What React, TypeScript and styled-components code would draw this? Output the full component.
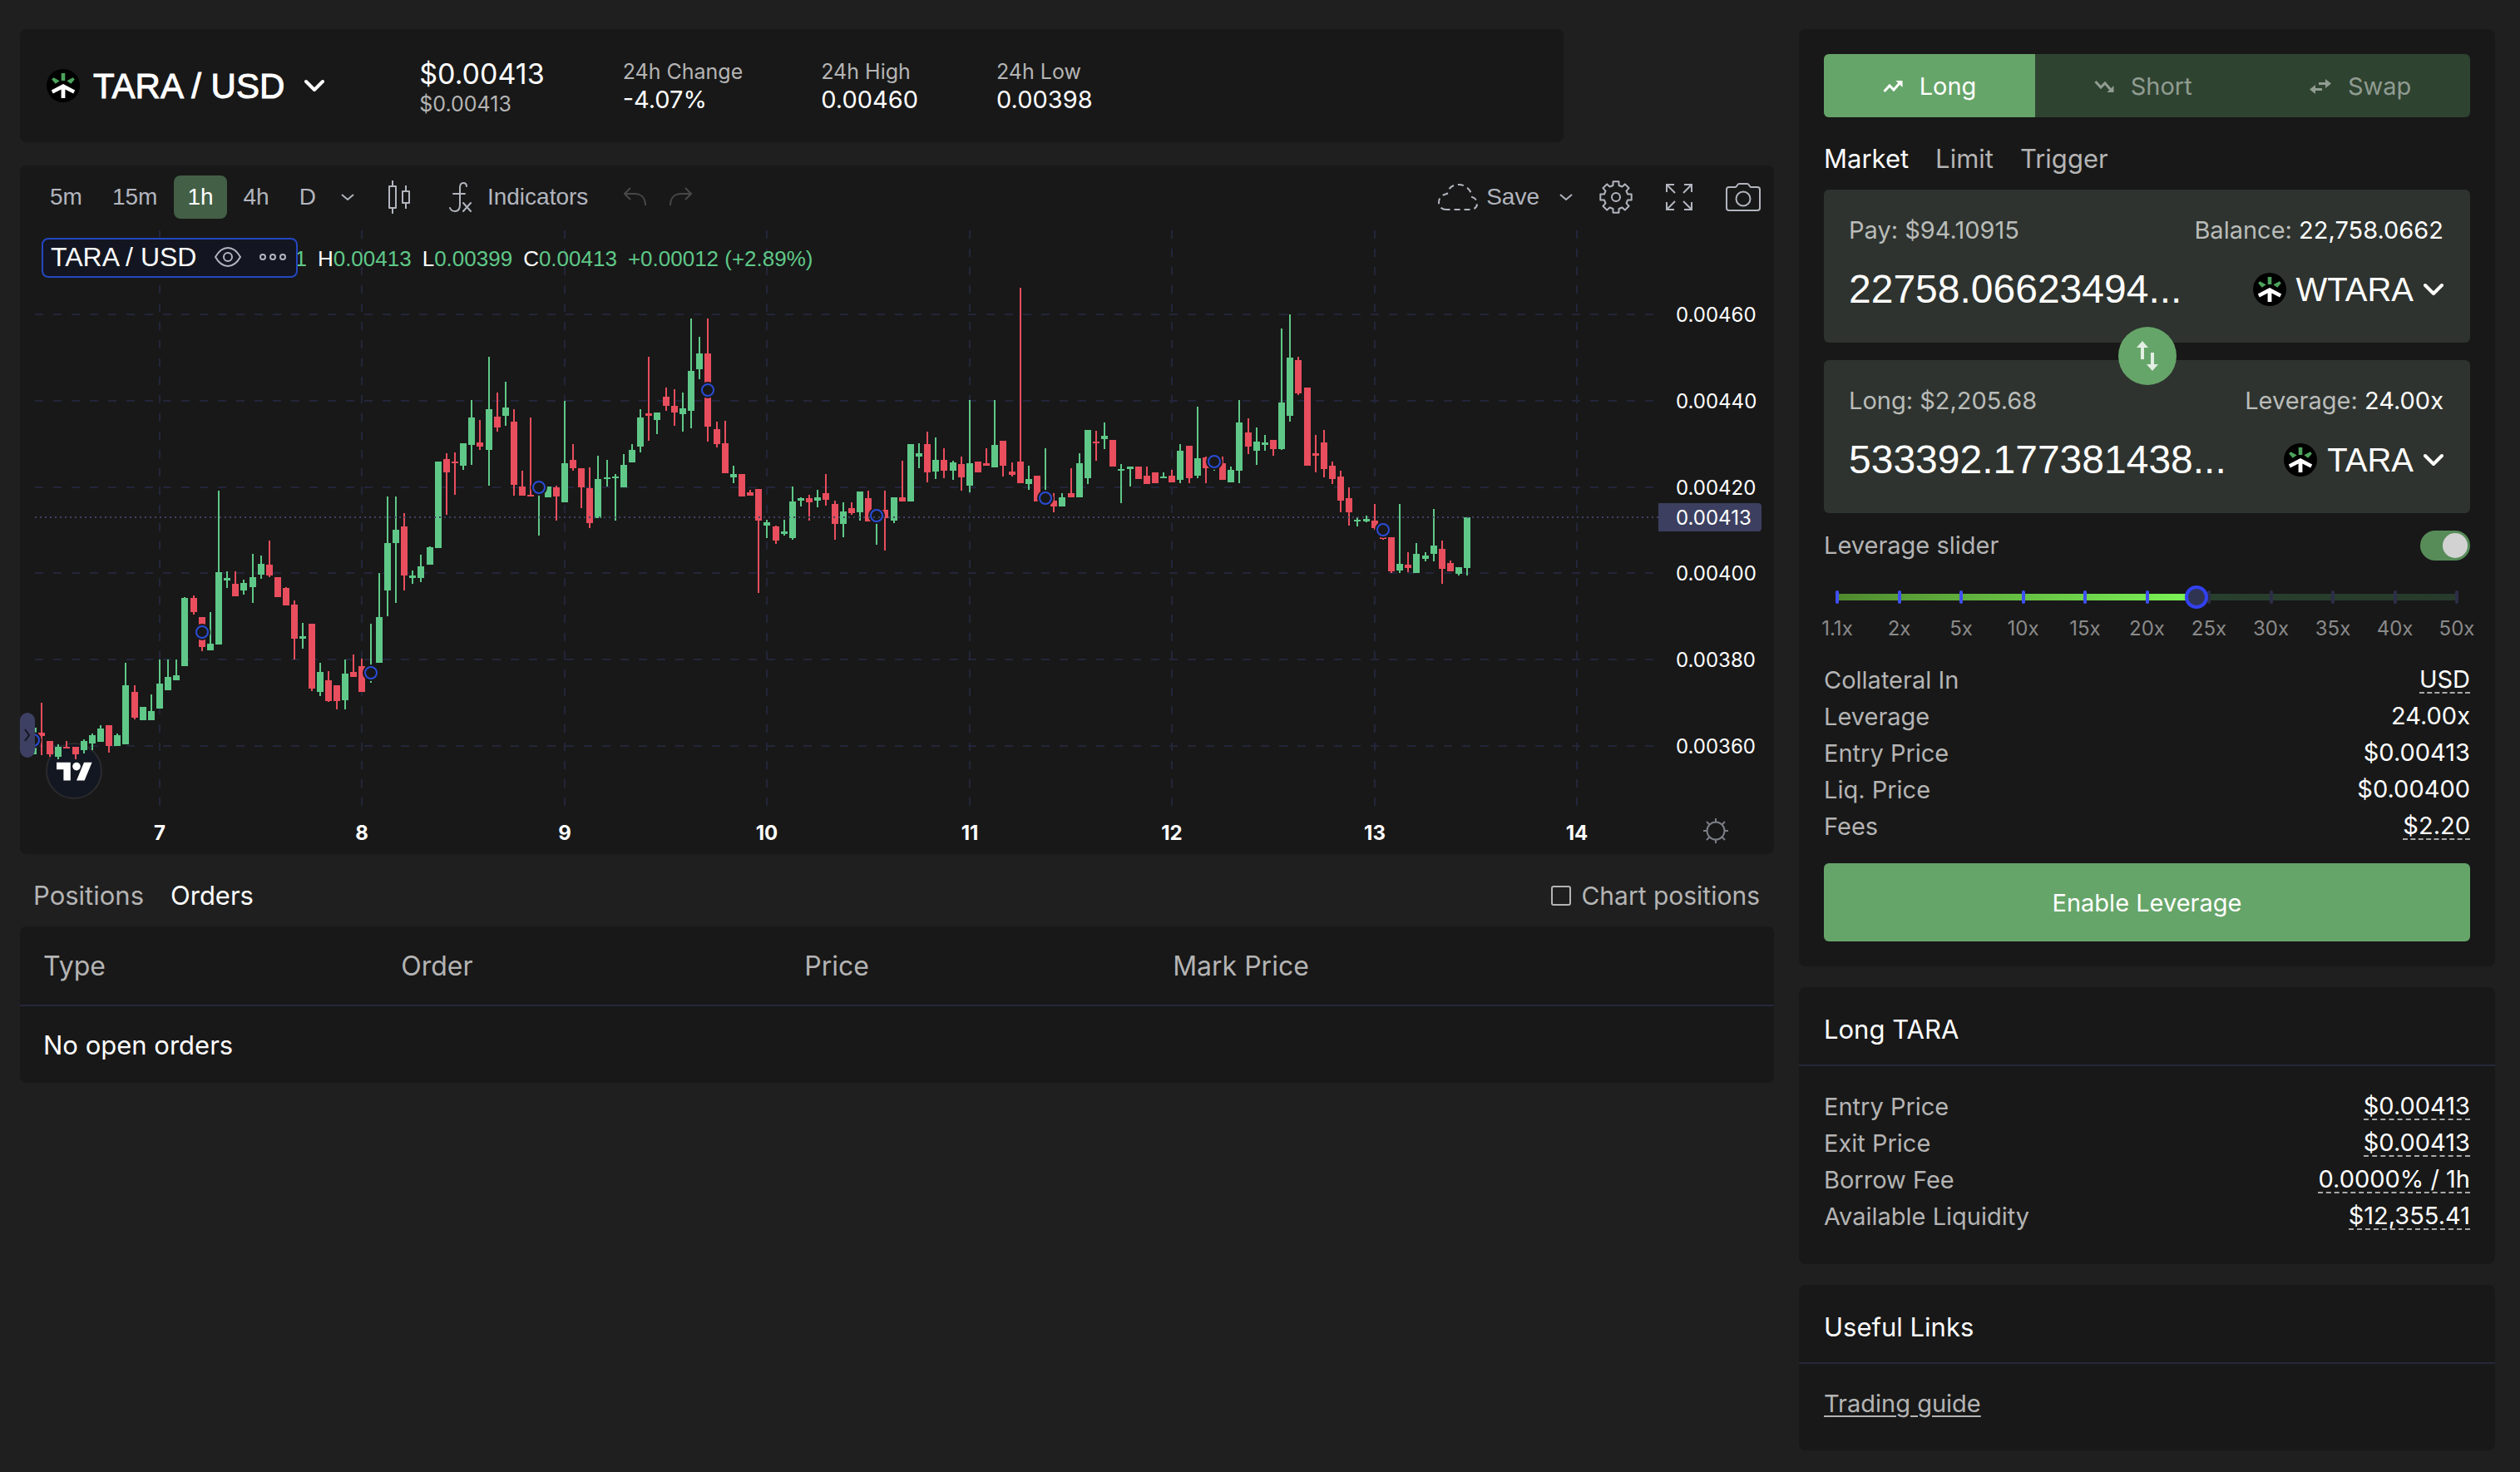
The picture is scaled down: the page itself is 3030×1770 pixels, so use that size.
import React, { useState } from "react";
import styled, { createGlobalStyle, css } from "styled-components";

const color = {
  page: "#1f1f1f",
  card: "#181818",
  field: "#2e332f",
  line: "#25273b",
  white: "#ffffff",
  muted: "#b4b4b4",
  dim: "#8a8a8a",
  tool: "#b2b5be",
  green: "#66a569",
  greenDark: "#2f4331",
  up: "#5fc888",
  down: "#e84e5d",
  blue: "#2a4cd6",
  tag: "#3c3f60",
};

const ui = `Inter, "Liberation Sans", sans-serif`;
const helvetica = `"Liberation Sans", Arial, sans-serif`;

const GlobalStyle = createGlobalStyle`
  *, *::before, *::after { box-sizing: border-box; }
  body {
    margin: 0;
    background: ${color.page};
    color: ${color.white};
    font: 400 29px/36px ${ui};
  }
  button, input { font: inherit; color: inherit; }
  button { border: 0; padding: 0; background: none; cursor: pointer; }
  svg { display: block; flex: none; }
  h1, h2, dl, dd { margin: 0; font-weight: 400; }
`;

/* ---------- layout ---------- */

const Page = styled.div`
  display: flex;
  align-items: flex-start;
  gap: 30px;
  padding: 35px 30px 27px 24px;
  @media (max-width: 1500px) {
    flex-direction: column;
    align-items: stretch;
  }
`;

const Main = styled.main`
  flex: 1 1 0;
  min-width: 0;
`;

const Side = styled.aside`
  flex: 0 0 837px;
  min-width: 0;
  display: flex;
  flex-direction: column;
  gap: 25px;
  @media (max-width: 1500px) {
    flex: none;
  }
`;

const Card = styled.section`
  background: ${color.card};
  border-radius: 8px;
`;

/* ---------- market header ---------- */

const MarketHeader = styled(Card)`
  display: flex;
  align-items: center;
  gap: 94px;
  width: 88%;
  min-height: 136px;
  padding: 0 32px;
`;

const PairButton = styled.button`
  display: flex;
  align-items: center;
  gap: 16px;
  margin-right: 20px;
  white-space: nowrap;
`;

const PairName = styled.span`
  padding-top: 2px;
  font: 400 42px/52px ${helvetica};
  -webkit-text-stroke: 1px ${color.white};
  margin-right: 8px;
`;

const Stat = styled.div<{ $price?: boolean }>`
  display: flex;
  flex-direction: column;
  white-space: nowrap;
  padding-top: ${(p) => (p.$price ? 4 : 0)}px;
`;

const StatLabel = styled.span`
  font-size: 25px;
  line-height: 33px;
  color: ${color.muted};
`;

const StatValue = styled.span<{ $large?: boolean }>`
  font-size: ${(p) => (p.$large ? 34 : 29)}px;
  line-height: ${(p) => (p.$large ? 40 : 33)}px;
`;

/* ---------- chart ---------- */

const ChartCard = styled(Card)`
  margin-top: 28px;
`;

const Toolbar = styled.div`
  display: flex;
  justify-content: space-between;
  padding: 12px 16px 14px 20px;
  font-family: ${helvetica};
  font-size: 28px;
  color: ${color.tool};
`;

const ToolGroup = styled.div<{ $gap: number }>`
  display: flex;
  align-items: center;
  gap: ${(p) => p.$gap}px;
`;

const ToolButton = styled.button<{ $active?: boolean; $pad?: number; $faint?: boolean }>`
  display: flex;
  align-items: center;
  gap: 18px;
  height: 52px;
  padding: 0 ${(p) => p.$pad ?? 16}px;
  border-radius: 8px;
  ${(p) => p.$active && css`background: #435f46; color: ${color.white};`}
  ${(p) => p.$faint && css`color: #484848;`}
`;

const SaveButton = styled(ToolButton)`
  gap: 10px;
`;

const Plot = styled.div`
  position: relative;
`;

const PlotSvg = styled.svg`
  width: 100%;
  height: auto;
  border-radius: 8px;
`;

const Legend = styled.div`
  position: absolute;
  top: 8px;
  left: 26px;
  display: flex;
  align-items: center;
  font: 400 26px/48px ${helvetica};
  white-space: nowrap;
`;

const LegendPair = styled.div`
  position: relative;
  z-index: 1;
  display: flex;
  align-items: center;
  height: 48px;
  margin-right: -4px;
  padding: 0 12px 2px 9px;
  border: 2px solid #2447c0;
  border-radius: 8px;
  background: #131621;
  color: ${color.tool};
`;

const LegendName = styled.span`
  font-size: 32px;
  line-height: 42px;
  color: ${color.white};
`;

const LegendButton = styled.button`
  margin-left: 22px;
`;

const Ohlc = styled.span<{ $gap?: number }>`
  padding-top: 2px;
  margin-left: ${(p) => p.$gap ?? 13}px;
  color: ${color.up};
`;

const OhlcKey = styled.span`
  color: ${color.white};
`;

const DrawerHandle = styled.button`
  position: absolute;
  left: 0;
  top: 580px;
  display: grid;
  place-items: center;
  width: 18px;
  height: 54px;
  border-radius: 9px;
  background: #3d3f63;
  color: #15161f;
`;

const AxisSettings = styled.button`
  position: absolute;
  right: 54px;
  bottom: 12px;
  color: #7c7e86;
`;

/* ---------- text tabs ---------- */

const TextTabs = styled.div<{ $inset?: boolean }>`
  display: flex;
  align-items: center;
  gap: 32px;
  padding: 32px ${(p) => (p.$inset ? 17 : 0)}px 19px ${(p) => (p.$inset ? 16 : 0)}px;
`;

const TextTab = styled.button<{ $active?: boolean }>`
  font-size: 31px;
  line-height: 36px;
  color: ${(p) => (p.$active ? color.white : color.muted)};
`;

const CheckLabel = styled.label`
  display: flex;
  align-items: center;
  gap: 12px;
  margin-left: auto;
  font-size: 30px;
  color: ${color.muted};
`;

const CheckBox = styled.input`
  appearance: none;
  width: 24px;
  height: 24px;
  margin: 0;
  border: 2px solid ${color.muted};
  border-radius: 3px;
  &:checked { background: ${color.green}; }
`;

/* ---------- orders table ---------- */

const OrdersTable = styled.table`
  width: 100%;
  table-layout: fixed;
  border-collapse: separate;
  border-spacing: 0;
  background: ${color.card};
  border-radius: 8px;
`;

const HeadCell = styled.th`
  height: 96px;
  padding: 2px 0 0 28px;
  border-bottom: 2px solid ${color.line};
  font-size: 32px;
  font-weight: 400;
  text-align: left;
  color: ${color.muted};
`;

const EmptyCell = styled.td`
  height: 92px;
  padding: 2px 0 0 28px;
  font-size: 31px;
`;

const Col = styled.col<{ $share: string }>`
  width: ${(p) => p.$share};
`;

/* ---------- trade box ---------- */

const TradeCard = styled(Card)`
  padding: 30px;
`;

const SideTabs = styled.div`
  display: flex;
  border-radius: 6px;
  overflow: hidden;
  background: ${color.greenDark};
`;

const SideTab = styled.button<{ $active?: boolean }>`
  flex: 1 1 auto;
  display: flex;
  align-items: center;
  justify-content: center;
  gap: 20px;
  height: 76px;
  padding-top: 2px;
  background: ${(p) => (p.$active ? color.green : "transparent")};
  color: ${(p) => (p.$active ? color.white : "#909c91")};
`;

const Fields = styled.div`
  position: relative;
  display: flex;
  flex-direction: column;
  gap: 21px;
`;

const Field = styled.div`
  padding: 30px 32px 34px 30px;
  border-radius: 6px;
  background: ${color.field};
`;

const FieldTop = styled.div`
  display: flex;
  justify-content: space-between;
  line-height: 38px;
  color: #b9bcb9;
`;

const FieldMain = styled.div`
  display: flex;
  align-items: center;
  justify-content: space-between;
  gap: 24px;
  height: 60px;
  margin-top: 22px;
`;

const Strong = styled.span`
  color: ${color.white};
`;

const AmountInput = styled.input`
  flex: 1 1 0;
  min-width: 0;
  padding: 0;
  border: 0;
  outline: 0;
  background: transparent;
  font: 400 48px/60px ${helvetica};
`;

const TokenButton = styled.button`
  display: flex;
  align-items: center;
  gap: 12px;
  font: 400 40px/48px ${helvetica};
`;

const SwitchButton = styled.button`
  position: absolute;
  left: calc(50% - 35px);
  top: calc(50% - 30px);
  display: grid;
  place-items: center;
  width: 70px;
  height: 70px;
  border-radius: 50%;
  background: ${color.green};
`;

const ToggleRow = styled.label`
  display: flex;
  align-items: center;
  justify-content: space-between;
  height: 36px;
  margin-top: 21px;
  color: ${color.muted};
`;

const Toggle = styled.input`
  appearance: none;
  display: flex;
  align-items: center;
  width: 60px;
  height: 36px;
  margin: 0;
  padding: 3px;
  border-radius: 18px;
  background: #3a3a3a;
  &::before {
    content: "";
    width: 30px;
    height: 30px;
    border-radius: 50%;
    background: #d2d2d2;
  }
  &:checked {
    background: #578c59;
    justify-content: flex-end;
  }
`;

const SliderBox = styled.div`
  position: relative;
  display: flex;
  align-items: center;
  height: 28px;
  margin: 30px 16px 0;
`;

const Rail = styled.div`
  flex: 1;
  display: flex;
  height: 8px;
  background: linear-gradient(90deg, #2b4733, #273a2b);
`;

const RailFill = styled.div`
  background: linear-gradient(90deg, #50892f, #7cf657);
`;

const Marks = styled.div`
  position: absolute;
  inset: 6px -2px;
  display: flex;
  justify-content: space-between;
`;

const Mark = styled.span<{ $on: boolean }>`
  width: 4px;
  border-radius: 2px;
  background: ${(p) => (p.$on ? "#3f50f2" : "#2c2e48")};
`;

const Range = styled.input`
  position: absolute;
  inset: 0 -14px;
  appearance: none;
  margin: 0;
  background: transparent;
  &::-webkit-slider-thumb {
    appearance: none;
    width: 28px;
    height: 28px;
    border: 4px solid #3241ee;
    border-radius: 50%;
    background: #2f3452;
  }
`;

const MarkLabels = styled.div`
  display: flex;
  justify-content: space-between;
  margin: 10px -21px 0;
  font-size: 24px;
  line-height: 28px;
  color: ${color.dim};
`;

const MarkLabel = styled.span`
  width: 74px;
  text-align: center;
`;

const InfoList = styled.dl<{ $first?: boolean }>`
  margin-top: ${(p) => (p.$first ? 26 : 0)}px;
`;

const InfoRow = styled.div`
  display: flex;
  align-items: center;
  justify-content: space-between;
  height: 44px;
`;

const InfoLabel = styled.dt`
  color: ${color.muted};
`;

const InfoValue = styled.dd<{ $hint?: boolean }>`
  line-height: 30px;
  border-bottom: 2px ${(p) => (p.$hint ? "dashed #a9a9a9" : "solid transparent")};
`;

const SubmitButton = styled.button`
  width: 100%;
  height: 94px;
  margin-top: 22px;
  padding-top: 2px;
  border-radius: 6px;
  background: ${color.green};
`;

const CardTitle = styled.h2`
  padding: 32px 30px 23px;
  border-bottom: 2px solid ${color.line};
  font-size: 31px;
  line-height: 38px;
`;

const CardBody = styled.div`
  padding: 27px 30px 35px;
`;

const GuideLink = styled.a`
  line-height: 42px;
  color: ${color.muted};
  text-decoration: underline;
  text-decoration-thickness: 2px;
  text-underline-offset: 4px;
`;

/* ---------- icons ---------- */

const TaraLogo = () => (
  <svg width="40" height="40" viewBox="0 0 40 40" aria-hidden="true">
    <circle cx="20" cy="20" r="20" fill="#000" />
    <path fill="#4ca35c" d="M17.7 5h4.6v9h-4.6zM8.3 10.3l7.4 4-5 3.4-4.5-5.2zM31.7 10.3l-7.4 4 5 3.4 4.5-5.2z" />
    <path fill="#fff" d="M20 18l14.2 7.6-2 4L22.4 24.600V35h-4.800V24.600L7.800 29.600l-2-4z" />
  </svg>
);

const Chevron = () => (
  <svg width="24" height="16" viewBox="0 0 24 16" fill="none" stroke="currentColor" strokeWidth="4" strokeLinecap="round" strokeLinejoin="round" aria-hidden="true">
    <path d="M2 3l10 10L22 3" />
  </svg>
);

const ThinChevron = () => (
  <svg width="16" height="10" viewBox="0 0 16 10" fill="none" stroke="currentColor" strokeWidth="2" aria-hidden="true">
    <path d="M1 2l7 6 7-6" />
  </svg>
);

const CandlesIcon = () => (
  <svg width="26" height="40" viewBox="0 0 26 40" fill="none" stroke="currentColor" strokeWidth="2" strokeLinejoin="round" aria-hidden="true">
    <path d="M5 0v6M5 34v6M1 7h8v26H1zM21 6v6M21 28v6M17 13h8v14h-8z" />
  </svg>
);

const FunctionIcon = () => (
  <svg width="28" height="36" viewBox="0 0 28 36" fill="none" stroke="currentColor" strokeWidth="2" strokeLinecap="round" aria-hidden="true">
    <path d="M21 5c0-3-2-4-4-4-3 0-4 2-4 6v20c0 5-2 8-6 8-3 0-5-1.500-6-4M5 14h14M17 25l9 10M26 25l-9 10" />
  </svg>
);

const ArrowBack = ({ flip }: { flip?: boolean }) => (
  <svg width="28" height="24" viewBox="0 0 28 24" fill="none" stroke="currentColor" strokeWidth="2" aria-hidden="true">
    <path d={flip ? "M20 1l7 7-7 7M27 8H15C7 8 2 13 2 22" : "M8 1L1 8l7 7M1 8h12c8 0 13 5 13 14"} />
  </svg>
);

const CloudIcon = () => (
  <svg width="48" height="34" viewBox="0 0 48 34" fill="none" stroke="currentColor" strokeWidth="2" strokeDasharray="7 5" aria-hidden="true">
    <path d="M10 32C4 32 1 28 1 23c0-6 5-9 10-10C13 5 18 2 25 2c8 0 15 6 16 15 4 1 6 4 6 8s-3 7-8 7z" />
  </svg>
);

const gearPath = (() => {
  const points: string[] = [];
  for (let i = 0; i < 8; i++) {
    const a = (i * Math.PI) / 4 - Math.PI / 2;
    const corners: [number, number][] = [[-0.25, 14.5], [-0.18, 19], [0.18, 19], [0.25, 14.5]];
    corners.forEach(([da, r]) => {
      points.push(`${(20 + r * Math.cos(a + da)).toFixed(1)} ${(20 + r * Math.sin(a + da)).toFixed(1)}`);
    });
  }
  return `M${points.join("L")}z`;
})();

const GearIcon = () => (
  <svg width="40" height="40" viewBox="0 0 40 40" fill="none" stroke="currentColor" strokeWidth="2" strokeLinejoin="round" aria-hidden="true">
    <path d={gearPath} />
    <circle cx="20" cy="20" r="5" />
  </svg>
);

const FullscreenIcon = () => (
  <svg width="32" height="32" viewBox="0 0 32 32" fill="none" stroke="currentColor" strokeWidth="2" aria-hidden="true">
    <path d="M1 10V1h9M1 1l10 10M22 1h9v9M31 1L21 11M1 22v9h9M1 31l10-10M22 31h9v-9M31 31L21 21" />
  </svg>
);

const CameraIcon = () => (
  <svg width="42" height="34" viewBox="0 0 42 34" fill="none" stroke="currentColor" strokeWidth="2" strokeLinejoin="round" aria-hidden="true">
    <path d="M4 5h8c1 0 2-4 4-4h10c2 0 3 4 4 4h8a3 3 0 0 1 3 3v22a3 3 0 0 1-3 3H4a3 3 0 0 1-3-3V8a3 3 0 0 1 3-3z" />
    <circle cx="21" cy="19" r="8.500" />
  </svg>
);

const EyeIcon = () => (
  <svg width="32" height="24" viewBox="0 0 32 24" fill="none" stroke="currentColor" strokeWidth="2" aria-hidden="true">
    <path d="M1 12C5 5 10 1 16 1s11 4 15 11c-4 7-9 11-15 11S5 19 1 12z" />
    <circle cx="16" cy="12" r="5" />
  </svg>
);

const DotsIcon = () => (
  <svg width="32" height="8" viewBox="0 0 32 8" fill="none" stroke="currentColor" strokeWidth="2" aria-hidden="true">
    <circle cx="4" cy="4" r="3" />
    <circle cx="16" cy="4" r="3" />
    <circle cx="28" cy="4" r="3" />
  </svg>
);

const SunIcon = () => (
  <svg width="32" height="32" viewBox="0 0 32 32" fill="none" stroke="currentColor" strokeWidth="2" aria-hidden="true">
    <circle cx="16" cy="16" r="10.500" />
    <path d="M16 1v5M16 26v5M1 16h5M26 16h5M5 5l4 4M23 23l4 4M27 5l-4 4M9 23l-4 4" />
  </svg>
);

const TrendIcon = ({ down }: { down?: boolean }) => (
  <svg width="24" height="16" viewBox="0 0 24 16" aria-hidden="true">
    <g transform={down ? "matrix(1 0 0 -1 0 16)" : undefined}>
      <path d="M1.500 14L8 7l5 5 7-8" fill="none" stroke="currentColor" strokeWidth="3" />
      <path d="M15.500 1H23.500V9z" fill="currentColor" />
    </g>
  </svg>
);

const SwapIcon = () => (
  <svg width="26" height="18" viewBox="0 0 26 18" fill="currentColor" aria-hidden="true">
    <path d="M11 4h8V0l7 5.500-7 5.500V7h-8zM15 11H7V7l-7 5.500L7 18v-4h8z" />
  </svg>
);

const FlipIcon = () => (
  <svg width="28" height="36" viewBox="0 0 28 36" fill="#e3efe4" aria-hidden="true">
    <path d="M8 0l7 8h-5v14H6V8H1zM20 36l-7-8h5V14h4v14h5z" />
  </svg>
);

/* ---------- chart data ---------- */

type Candle = [number, number, number, number, number];

// Hourly candles from the 6th at 09:00: [up, high, body top, body bottom, low], in half-pixel steps below the plot origin.
const candles: Candle[] = [
  [1, 1228, 1228, 1294, 1294], [0, 1166, 1240, 1248, 1296], [0, 1261, 1261, 1294, 1300], [1, 1268, 1275, 1300, 1306],
  [0, 1261, 1275, 1278, 1278], [0, 1275, 1275, 1294, 1306], [1, 1256, 1261, 1283, 1292], [1, 1242, 1246, 1267, 1283],
  [1, 1221, 1230, 1263, 1263], [0, 1221, 1221, 1273, 1289], [1, 1242, 1246, 1273, 1273], [1, 1067, 1122, 1269, 1269],
  [0, 1122, 1139, 1203, 1207], [1, 1176, 1176, 1209, 1209], [1, 1145, 1186, 1209, 1209],
  [1, 1058, 1118, 1180, 1180], [1, 1058, 1102, 1135, 1135], [1, 1058, 1098, 1110, 1110], [1, 904, 906, 1075, 1075],
  [0, 900, 906, 941, 947], [0, 953, 953, 1027, 1038], [1, 941, 1019, 1036, 1036], [1, 640, 842, 1021, 1021],
  [1, 840, 856, 862, 881], [0, 840, 871, 902, 902], [1, 860, 869, 887, 897], [1, 796, 854, 879, 918],
  [1, 801, 821, 848, 858], [0, 763, 823, 850, 854], [0, 854, 854, 904, 904], [0, 879, 881, 924, 924],
  [0, 912, 922, 1007, 1058], [1, 968, 1001, 1007, 1032], [0, 970, 970, 1131, 1137], [1, 1067, 1089, 1139, 1149],
  [0, 1087, 1110, 1162, 1164], [0, 1122, 1122, 1162, 1182], [1, 1058, 1093, 1159, 1182], [0, 1046, 1089, 1102, 1102],
  [0, 1056, 1075, 1139, 1139], [1, 970, 1085, 1110, 1116], [1, 844, 953, 1067, 1067], [1, 654, 770, 887, 951],
  [1, 654, 737, 770, 918], [0, 695, 728, 850, 887], [1, 838, 850, 856, 871], [1, 798, 827, 856, 867],
  [1, 778, 780, 823, 823], [1, 567, 567, 782, 782], [0, 547, 561, 594, 699], [0, 545, 567, 571, 650],
  [1, 522, 522, 578, 588], [1, 415, 458, 526, 576], [0, 464, 520, 530, 538], [1, 307, 437, 538, 627],
  [0, 396, 456, 483, 493], [1, 369, 433, 454, 479], [0, 437, 468, 625, 652], [0, 590, 629, 652, 652],
  [0, 458, 650, 654, 654], [1, 620, 625, 640, 751], [1, 630, 630, 656, 656], [0, 627, 631, 654, 714],
  [1, 417, 571, 668, 668], [0, 524, 563, 584, 590], [0, 584, 584, 631, 683], [0, 582, 633, 720, 732],
  [1, 553, 611, 708, 708], [1, 563, 607, 611, 629], [1, 598, 605, 608, 714], [1, 549, 576, 631, 631],
  [1, 524, 538, 569, 569], [1, 437, 458, 530, 545], [0, 307, 448, 454, 516], [1, 446, 446, 464, 499],
  [0, 384, 406, 429, 442], [0, 388, 429, 446, 479], [1, 396, 435, 450, 493], [1, 213, 342, 442, 485],
  [1, 258, 299, 338, 363], [0, 213, 299, 481, 518], [0, 468, 487, 524, 532], [0, 466, 522, 596, 596],
  [1, 578, 598, 607, 621], [0, 598, 598, 654, 654], [0, 638, 644, 652, 652], [0, 635, 635, 714, 893],
  [1, 712, 718, 726, 757], [0, 726, 728, 763, 772], [1, 712, 741, 747, 751], [1, 629, 666, 757, 761],
  [1, 656, 658, 664, 679], [0, 650, 658, 668, 714], [1, 638, 656, 664, 681], [0, 598, 646, 662, 677],
  [0, 664, 673, 722, 761], [1, 668, 691, 722, 755], [0, 668, 683, 695, 699], [1, 642, 642, 693, 714],
  [0, 640, 658, 716, 716], [1, 690, 695, 712, 774], [0, 640, 687, 708, 788], [1, 656, 656, 714, 720],
  [0, 565, 656, 666, 666], [1, 524, 524, 666, 666], [1, 522, 547, 555, 584], [0, 493, 524, 594, 619],
  [1, 508, 563, 592, 611], [0, 534, 563, 590, 609], [1, 565, 569, 590, 613], [0, 555, 574, 607, 640],
  [1, 415, 571, 627, 644], [0, 567, 567, 594, 594], [0, 534, 571, 578, 578], [1, 415, 526, 582, 582],
  [0, 516, 516, 578, 605], [0, 569, 592, 600, 605], [0, 136, 567, 621, 621], [1, 578, 611, 623, 638],
  [0, 602, 602, 666, 666], [1, 534, 650, 665, 670], [0, 646, 664, 679, 693], [1, 646, 656, 679, 679],
  [0, 584, 646, 656, 656], [1, 547, 571, 656, 656], [1, 489, 489, 609, 623], [0, 491, 518, 522, 565],
  [1, 470, 503, 512, 536], [0, 514, 514, 580, 580], [1, 574, 586, 590, 671], [1, 580, 580, 586, 629],
  [0, 580, 580, 611, 611], [0, 580, 602, 623, 623], [0, 594, 594, 621, 621], [1, 594, 605, 609, 609],
  [0, 588, 602, 619, 619], [1, 524, 541, 613, 621], [0, 528, 528, 609, 621], [1, 431, 559, 602, 609],
  [0, 555, 557, 584, 621], [1, 560, 562, 575, 590], [0, 555, 572, 613, 613], [1, 580, 588, 619, 619],
  [1, 415, 470, 590, 621], [0, 460, 495, 530, 549], [1, 483, 518, 541, 576], [1, 501, 520, 526, 541],
  [0, 514, 514, 536, 553], [1, 237, 421, 536, 539], [1, 202, 310, 454, 468], [0, 307, 316, 398, 402],
  [0, 384, 384, 578, 578], [0, 501, 547, 553, 594], [0, 489, 520, 586, 607], [0, 567, 578, 611, 623],
  [0, 590, 605, 664, 693], [0, 631, 658, 693, 726], [1, 706, 711, 715, 728], [1, 702, 710, 716, 718],
  [0, 673, 714, 733, 736], [0, 735, 740, 759, 761], [0, 755, 755, 840, 844], [1, 673, 821, 838, 844],
  [0, 792, 823, 832, 842], [1, 770, 796, 844, 844], [1, 792, 801, 809, 815], [1, 685, 776, 796, 815],
  [0, 763, 784, 834, 871], [0, 813, 819, 840, 840], [1, 829, 829, 846, 850], [1, 706, 706, 832, 850],
];

// Trade markers: [hour counted from midnight of the 7th, vertical step]
const markers: [number, number][] = [
  [-15, 1258], [5, 990], [25, 1091], [45, 632], [65, 390], [85, 702], [105, 658], [125, 567], [145, 737],
];

const prices = ["0.00460", "0.00440", "0.00420", "0.00400", "0.00380", "0.00360"];
const days = [7, 8, 9, 10, 11, 12, 13, 14];

const FIRST_HOUR = -15;
const xOf = (hour: number) => Math.round(168 + hour * 10.144);
const yOf = (step: number) => Math.round(3 + step / 2.063);
const dayX = (i: number) => xOf(i * 24);
const priceY = (i: number) => Math.round(101 + i * 103.8);

const PriceChart = () => (
  <PlotSvg viewBox="0 0 2109 750" role="img" aria-label="TARA / USD hourly candles">
    <g stroke="#23253a" strokeWidth="2" strokeDasharray="10 12">
      {days.map((d, i) => <path key={d} d={`M${dayX(i)} 0V693`} />)}
      {prices.map((p, i) => <path key={p} d={`M18 ${priceY(i)}H1964`} />)}
    </g>
    <g transform="translate(65 650)">
      <circle r="33" fill="#131722" stroke="#2b2b2e" strokeWidth="2" />
      <g transform="translate(-21 -15) scale(1.200)" fill="#fff">
        <path d="M14 22H7V11H0V4h14zM28 22h-8l7.500-18h8z" />
        <circle cx="20" cy="8" r="4" />
      </g>
    </g>
    {candles.map(([up, high, top, bottom, low], i) => {
      const x = xOf(i + FIRST_HOUR);
      return (
        <g key={i} fill={up ? color.up : color.down}>
          <rect x={x - 1} y={yOf(high)} width="2" height={yOf(low) - yOf(high)} />
          <rect x={x - 4} y={yOf(top)} width="8" height={Math.max(2, yOf(bottom) - yOf(top))} />
        </g>
      );
    })}
    {markers.map(([hour, step]) => (
      <g key={hour} fill={color.card}>
        <circle cx={xOf(hour)} cy={yOf(step)} r="10" />
        <circle cx={xOf(hour)} cy={yOf(step)} r="7" stroke={color.blue} strokeWidth="2" />
      </g>
    ))}
    <path d="M18 345H1970" stroke="#3f4164" strokeWidth="2" strokeDasharray="2 4" />
    <path d="M1970 328h120a4 4 0 0 1 4 4v26a4 4 0 0 1-4 4h-120z" fill={color.tag} />
    <g fill="#fff" fontFamily={ui} fontSize="24">
      {prices.map((p, i) => <text key={p} x="1991" y={priceY(i) + 9}>{p}</text>)}
      <text x="1991" y="354">0.00413</text>
    </g>
    <g fill="#fff" fontFamily={ui} fontSize="24" fontWeight="700" textAnchor="middle">
      {days.map((d, i) => <text key={d} x={dayX(i)} y="733">{d}</text>)}
    </g>
  </PlotSvg>
);

/* ---------- page ---------- */

const marks = ["1.1x", "2x", "5x", "10x", "15x", "20x", "25x", "30x", "35x", "40x", "50x"];

const tradeInfo = [
  { label: "Collateral In", value: "USD", hint: true },
  { label: "Leverage", value: "24.00x" },
  { label: "Entry Price", value: "$0.00413" },
  { label: "Liq. Price", value: "$0.00400" },
  { label: "Fees", value: "$2.20", hint: true },
];

const longInfo = [
  { label: "Entry Price", value: "$0.00413", hint: true },
  { label: "Exit Price", value: "$0.00413", hint: true },
  { label: "Borrow Fee", value: "0.0000% / 1h", hint: true },
  { label: "Available Liquidity", value: "$12,355.41", hint: true },
];

const Info = ({ rows, first }: { rows: { label: string; value: string; hint?: boolean }[]; first?: boolean }) => (
  <InfoList $first={first}>
    {rows.map((r) => (
      <InfoRow key={r.label}>
        <InfoLabel>{r.label}</InfoLabel>
        <InfoValue $hint={r.hint}>{r.value}</InfoValue>
      </InfoRow>
    ))}
  </InfoList>
);

export default function App() {
  const [leverage, setLeverage] = useState(58);
  const [useSlider, setUseSlider] = useState(true);
  const [chartPositions, setChartPositions] = useState(false);
  const [pay, setPay] = useState("22758.06623494...");
  const [size, setSize] = useState("533392.177381438...");

  return (
    <>
      <GlobalStyle />
      <Page>
        <Main>
          <MarketHeader>
            <PairButton>
              <TaraLogo />
              <PairName>TARA / USD</PairName>
              <Chevron />
            </PairButton>
            <Stat $price>
              <StatValue $large>$0.00413</StatValue>
              <StatLabel>$0.00413</StatLabel>
            </Stat>
            <Stat>
              <StatLabel>24h Change</StatLabel>
              <StatValue>-4.07%</StatValue>
            </Stat>
            <Stat>
              <StatLabel>24h High</StatLabel>
              <StatValue>0.00460</StatValue>
            </Stat>
            <Stat>
              <StatLabel>24h Low</StatLabel>
              <StatValue>0.00398</StatValue>
            </Stat>
          </MarketHeader>

          <ChartCard>
            <Toolbar>
              <ToolGroup $gap={16}>
                <ToolGroup $gap={4}>
                  <ToolButton>5m</ToolButton>
                  <ToolButton>15m</ToolButton>
                  <ToolButton $active>1h</ToolButton>
                  <ToolButton>4h</ToolButton>
                  <ToolButton>D</ToolButton>
                  <ToolButton $pad={10} aria-label="More intervals"><ThinChevron /></ToolButton>
                </ToolGroup>
                <ToolButton $pad={15} aria-label="Chart type"><CandlesIcon /></ToolButton>
                <ToolButton><FunctionIcon />Indicators</ToolButton>
                <ToolGroup $gap={4}>
                  <ToolButton $pad={11} $faint aria-label="Undo"><ArrowBack /></ToolButton>
                  <ToolButton $pad={11} $faint aria-label="Redo"><ArrowBack flip /></ToolButton>
                </ToolGroup>
              </ToolGroup>
              <ToolGroup $gap={22}>
                <ToolGroup $gap={14}>
                  <SaveButton $pad={0}><CloudIcon />Save</SaveButton>
                  <ToolButton $pad={10} aria-label="Save options"><ThinChevron /></ToolButton>
                </ToolGroup>
                <ToolGroup $gap={40}>
                  <ToolButton $pad={0} aria-label="Chart settings"><GearIcon /></ToolButton>
                  <ToolButton $pad={0} aria-label="Fullscreen"><FullscreenIcon /></ToolButton>
                  <ToolButton $pad={0} aria-label="Snapshot"><CameraIcon /></ToolButton>
                </ToolGroup>
              </ToolGroup>
            </Toolbar>
            <Plot>
              <PriceChart />
              <Legend>
                <LegendPair>
                  <LegendName>TARA / USD</LegendName>
                  <LegendButton aria-label="Hide"><EyeIcon /></LegendButton>
                  <LegendButton aria-label="More"><DotsIcon /></LegendButton>
                </LegendPair>
                <Ohlc $gap={0}>1</Ohlc>
                <Ohlc><OhlcKey>H</OhlcKey>0.00413</Ohlc>
                <Ohlc><OhlcKey>L</OhlcKey>0.00399</Ohlc>
                <Ohlc><OhlcKey>C</OhlcKey>0.00413</Ohlc>
                <Ohlc>+0.00012 (+2.89%)</Ohlc>
              </Legend>
              <DrawerHandle aria-label="Show drawing tools">
                <svg width="8" height="16" viewBox="0 0 8 16" fill="none" stroke="currentColor" strokeWidth="2"><path d="M1 1l5 7-5 7" /></svg>
              </DrawerHandle>
              <AxisSettings aria-label="Axis settings"><SunIcon /></AxisSettings>
            </Plot>
          </ChartCard>

          <TextTabs $inset>
            <TextTab>Positions</TextTab>
            <TextTab $active>Orders</TextTab>
            <CheckLabel>
              <CheckBox type="checkbox" checked={chartPositions} onChange={(e) => setChartPositions(e.target.checked)} />
              Chart positions
            </CheckLabel>
          </TextTabs>

          <OrdersTable>
            <colgroup>
              <Col $share="20.4%" />
              <Col $share="23%" />
              <Col $share="21%" />
              <Col $share="35.6%" />
            </colgroup>
            <thead>
              <tr>
                <HeadCell>Type</HeadCell>
                <HeadCell>Order</HeadCell>
                <HeadCell>Price</HeadCell>
                <HeadCell>Mark Price</HeadCell>
              </tr>
            </thead>
            <tbody>
              <tr><EmptyCell colSpan={4}>No open orders</EmptyCell></tr>
            </tbody>
          </OrdersTable>
        </Main>

        <Side>
          <TradeCard>
            <SideTabs>
              <SideTab $active><TrendIcon />Long</SideTab>
              <SideTab><TrendIcon down />Short</SideTab>
              <SideTab><SwapIcon />Swap</SideTab>
            </SideTabs>
            <TextTabs>
              <TextTab $active>Market</TextTab>
              <TextTab>Limit</TextTab>
              <TextTab>Trigger</TextTab>
            </TextTabs>
            <Fields>
              <Field>
                <FieldTop>
                  <label htmlFor="pay">Pay: $94.10915</label>
                  <span>Balance: <Strong>22,758.0662</Strong></span>
                </FieldTop>
                <FieldMain>
                  <AmountInput id="pay" value={pay} onChange={(e) => setPay(e.target.value)} />
                  <TokenButton><TaraLogo />WTARA<Chevron /></TokenButton>
                </FieldMain>
              </Field>
              <Field>
                <FieldTop>
                  <label htmlFor="size">Long: $2,205.68</label>
                  <span>Leverage: <Strong>24.00x</Strong></span>
                </FieldTop>
                <FieldMain>
                  <AmountInput id="size" value={size} onChange={(e) => setSize(e.target.value)} />
                  <TokenButton><TaraLogo />TARA<Chevron /></TokenButton>
                </FieldMain>
              </Field>
              <SwitchButton aria-label="Switch tokens"><FlipIcon /></SwitchButton>
            </Fields>
            <ToggleRow>
              Leverage slider
              <Toggle type="checkbox" checked={useSlider} onChange={(e) => setUseSlider(e.target.checked)} />
            </ToggleRow>
            <SliderBox>
              <Rail><RailFill style={{ width: `${leverage}%` }} /></Rail>
              <Marks>
                {marks.map((m, i) => <Mark key={m} $on={i * 10 <= leverage} />)}
              </Marks>
              <Range type="range" min={0} max={100} value={leverage} aria-label="Leverage" onChange={(e) => setLeverage(Number(e.target.value))} />
            </SliderBox>
            <MarkLabels>
              {marks.map((m) => <MarkLabel key={m}>{m}</MarkLabel>)}
            </MarkLabels>
            <Info rows={tradeInfo} first />
            <SubmitButton>Enable Leverage</SubmitButton>
          </TradeCard>

          <Card>
            <CardTitle>Long TARA</CardTitle>
            <CardBody><Info rows={longInfo} /></CardBody>
          </Card>

          <Card>
            <CardTitle>Useful Links</CardTitle>
            <CardBody><GuideLink href="#guide">Trading guide</GuideLink></CardBody>
          </Card>
        </Side>
      </Page>
    </>
  );
}
